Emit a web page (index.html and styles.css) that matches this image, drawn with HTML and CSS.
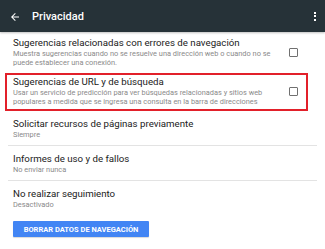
FILE: index.html
```html
<!DOCTYPE html>
<html lang="es">
<head>
<meta charset="utf-8">
<link rel="stylesheet" href="styles.css">
</head>
<body>
<header class="appbar">
  <svg class="back" width="12" height="12" viewBox="0 0 24 24"><path d="M20 11H7.83l5.59-5.59L12 4l-8 8 8 8 1.41-1.41L7.83 13H20v-2z" fill="#fff"/></svg>
  <span class="title">Privacidad</span>
  <span class="dots"><i></i><i></i><i></i></span>
</header>
<main class="list">
  <div class="item first">
    <div class="text">
      <div class="t">Sugerencias relacionadas con errores de navegación</div>
      <div class="s">Muestra sugerencias cuando no se resuelve una dirección web o cuando no se puede establecer una conexión.</div>
    </div>
    <span class="cb"></span>
  </div>
  <div class="item hl">
    <div class="text">
      <div class="t">Sugerencias de URL y de búsqueda</div>
      <div class="s">Usar un servicio de predicción para ver búsquedas relacionadas y sitios web populares a medida que se ingresa una consulta en la barra de direcciones</div>
    </div>
    <span class="cb"></span>
  </div>
  <div class="item plain sep">
    <div class="text">
      <div class="t">Solicitar recursos de páginas previamente</div>
      <div class="s">Siempre</div>
    </div>
  </div>
  <div class="item plain sep">
    <div class="text">
      <div class="t">Informes de uso y de fallos</div>
      <div class="s">No enviar nunca</div>
    </div>
  </div>
  <div class="item plain">
    <div class="text">
      <div class="t">No realizar seguimiento</div>
      <div class="s">Desactivado</div>
    </div>
  </div>
  <div class="actions">
    <button class="btn">BORRAR DATOS DE NAVEGACIÓN</button>
  </div>
</main>
</body>
</html>
```
FILE: styles.css
```css
html, body {
  margin: 0;
  padding: 0;
  background: #fff;
  font-family: Roboto, "Noto Sans", sans-serif;
  width: 325px;
  height: 249px;
  overflow: hidden;
}
.appbar {
  height: 32px;
  background: #263238;
  display: flex;
  align-items: center;
  box-shadow: 0 1px 2px rgba(0,0,0,0.25);
  position: relative;
}
.back {
  margin-left: 9px;
  margin-top: 1px;
}
.title {
  color: #fff;
  font-size: 11px;
  font-weight: 500;
  margin-left: 11px;
  margin-top: 1px;
}
.dots {
  margin-left: auto;
  margin-right: 9px;
  display: flex;
  flex-direction: column;
  gap: 1.5px;
}
.dots i {
  display: block;
  width: 2px;
  height: 2px;
  background: #fff;
}
.list {
  display: flex;
  flex-direction: column;
}
.item {
  display: flex;
  align-items: center;
  padding: 0 27px 0 13px;
}
.text { flex: 1; }
.t {
  font-size: 9.7px;
  line-height: 12px;
  color: #212121;
}
.s {
  font-size: 7.4px;
  line-height: 9px;
  color: #8a8a8a;
}
.cb {
  width: 7px;
  height: 7px;
  border: 1.5px solid #707070;
  border-radius: 1px;
  margin-left: 12px;
  flex: none;
}
.first {
  padding-top: 5px;
  padding-bottom: 6px;
}
.hl {
  margin: 0 17px 0 5px;
  border: 2px solid #e2202a;
  padding: 1px 8px 3px 6px;
}
.plain {
  padding-top: 6.5px;
  padding-bottom: 6.5px;
}
.sep {
  border-bottom: 1px solid #e3e3e3;
  margin: 0 8px;
  padding-left: 5px;
  padding-right: 19px;
}
.actions {
  display: flex;
  padding: 6px 13px 0;
}
.btn {
  width: 136px;
  height: 16px;
  border: none;
  border-radius: 1px;
  background: #4285f4;
  color: #fff;
  font-family: Roboto, sans-serif;
  font-weight: 700;
  font-size: 7.5px;
  padding: 0;
  box-shadow: 0 1px 1px rgba(0,0,0,0.15);
}
```
